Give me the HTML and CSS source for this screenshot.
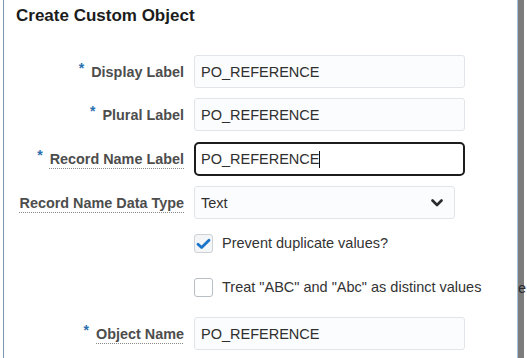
FILE: index.html
```html
<!DOCTYPE html>
<html lang="en">
<head>
    <meta charset="UTF-8">
    <meta name="viewport" content="width=device-width, initial-scale=1.0">
    <title>Create Custom Object</title>
    <link rel="stylesheet" href="styles.css">
</head>
<body>
    <div class="dialog">
        <h1 class="dialog-title">Create Custom Object</h1>

        <form class="object-form">
            <label class="form-label" for="displayLabel"><span class="required">*</span> Display Label</label>
            <input class="field" id="displayLabel" type="text" value="PO_REFERENCE">

            <label class="form-label" for="pluralLabel"><span class="required">*</span> Plural Label</label>
            <input class="field" id="pluralLabel" type="text" value="PO_REFERENCE">

            <label class="form-label"><span class="required">*</span> <span class="help-term">Record Name Label</span></label>
            <div class="field field-focused"><span>PO_REFERENCE</span><span class="caret"></span></div>

            <label class="form-label" for="dataType"><span class="help-term">Record Name Data Type</span></label>
            <div class="select-wrap">
                <select class="field field-select" id="dataType">
                    <option selected>Text</option>
                    <option>Number</option>
                </select>
                <svg class="chevron" width="12" height="8" viewBox="0 0 12 8">
                    <polyline points="1.5,1.5 6,6 10.5,1.5" fill="none" stroke="#2b2b2b" stroke-width="2.6" stroke-linecap="round" stroke-linejoin="round"/>
                </svg>
            </div>

            <span></span>
            <label class="check-row">
                <span class="checkbox checked">
                    <svg width="15" height="12" viewBox="0 0 15 12">
                        <polyline points="2,6.2 5.6,9.6 13,2.2" fill="none" stroke="#1a74c9" stroke-width="2.8" stroke-linecap="round" stroke-linejoin="round"/>
                    </svg>
                </span>
                Prevent duplicate values?
            </label>

            <span></span>
            <label class="check-row">
                <span class="checkbox"></span>
                Treat "ABC" and "Abc" as distinct values
            </label>

            <label class="form-label" for="objectName"><span class="required">*</span> <span class="help-term">Object Name</span></label>
            <input class="field" id="objectName" type="text" value="PO_REFERENCE">
        </form>
    </div>

    <div class="edge">
        <span class="edge-text">e</span>
    </div>
</body>
</html>
```

FILE: styles.css
```css
body {
    margin: 0;
    font-family: "Liberation Sans", Arial, sans-serif;
    background: #fff;
    display: flex;
    height: 358px;
    overflow: hidden;
}

.dialog {
    margin-left: 3px;
    width: 513px;
    border-left: 1px solid #7f97ad;
    background: #fff;
}

.dialog-title {
    margin: 6px 0 0 12px;
    font-size: 17px;
    line-height: 20px;
    font-weight: bold;
    color: #1c1c1c;
}

.object-form {
    margin-top: 29px;
    display: grid;
    grid-template-columns: 180px 271px;
    grid-template-rows: 33px 34px 34px 33px 34px 34px 33px;
    column-gap: 10px;
    row-gap: 10px;
}

.form-label {
    display: flex;
    align-items: center;
    justify-content: flex-end;
    gap: 7px;
    font-size: 14.4px;
    font-weight: bold;
    color: #4d4d4d;
    white-space: nowrap;
}

.required {
    color: #2a6fae;
    font-size: 14px;
    position: relative;
    top: -4px;
}

.help-term {
    text-decoration: underline dotted #8a8a8a;
    text-underline-offset: 4px;
    text-decoration-thickness: 1px;
}

.field {
    box-sizing: border-box;
    width: 271px;
    height: 33px;
    margin: 0;
    padding: 0 6px;
    border: 1px solid #e1e5e9;
    border-radius: 3px;
    background: #fbfcfd;
    font-family: inherit;
    font-size: 14.5px;
    color: #2f2f2f;
    outline: none;
}

.field-focused {
    height: 34px;
    display: flex;
    align-items: center;
    border: 2px solid #1c1c1c;
    border-radius: 5px;
    padding: 0 5px;
    background: #fff;
}

.caret {
    width: 1px;
    height: 17px;
    background: #111;
}

.select-wrap {
    position: relative;
    width: 261px;
}

.field-select {
    width: 261px;
    appearance: none;
    -webkit-appearance: none;
    padding-left: 6px;
}

.chevron {
    position: absolute;
    right: 12px;
    top: 13px;
    pointer-events: none;
}

.check-row {
    display: flex;
    align-items: flex-start;
    gap: 9px;
    padding-top: 5px;
    font-size: 14.5px;
    line-height: 19px;
    color: #333;
    white-space: nowrap;
}

.checkbox {
    flex-shrink: 0;
    box-sizing: border-box;
    width: 19px;
    height: 19px;
    border: 1px solid #b9bec4;
    border-radius: 3px;
    background: #fff;
    display: flex;
    align-items: center;
    justify-content: center;
}

.checkbox.checked {
    border-color: #cdd2d7;
    background: #f3f5f7;
}

.edge {
    width: 6px;
    border-left: 1px solid #a8c2da;
    background: #7c7c7c;
    padding-top: 279px;
}

.edge-text {
    display: block;
    font-size: 14.5px;
    line-height: 19px;
    color: #2a2a2a;
}
```
